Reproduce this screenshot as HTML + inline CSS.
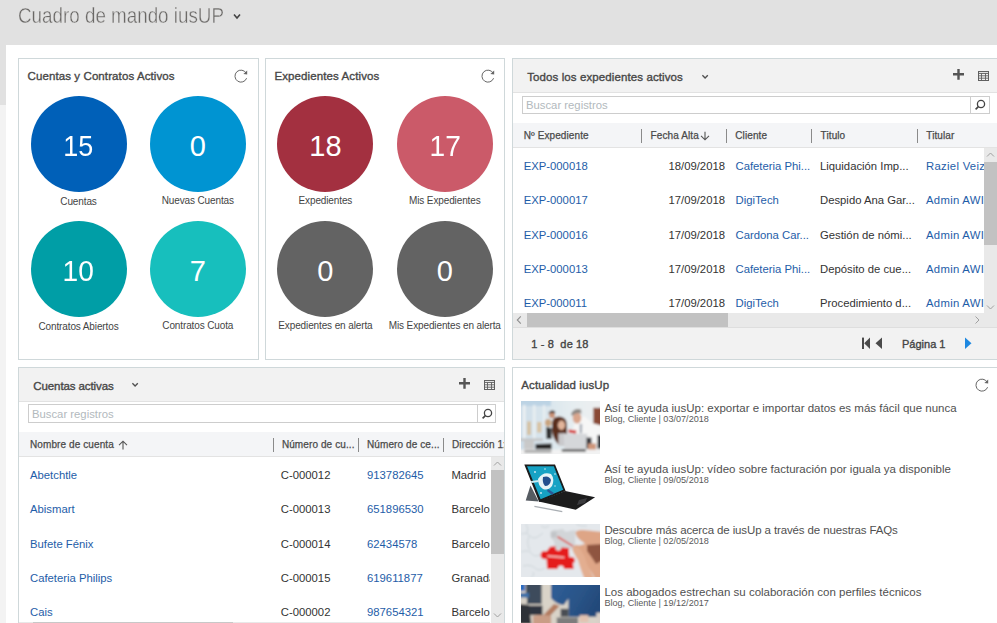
<!DOCTYPE html>
<html><head><meta charset="utf-8">
<style>
*{box-sizing:border-box;margin:0;padding:0}
html,body{width:997px;height:623px;overflow:hidden}
body{position:relative;background:#e1e1e1;font-family:"Liberation Sans",sans-serif;color:#333}
.a{position:absolute}
.t{position:absolute;white-space:nowrap;line-height:1;transform-origin:0 0}
.pnl{position:absolute;border:1px solid #cfd8da;background:#fff;overflow:hidden}
.hd{font-size:11.5px;color:#474747;-webkit-text-stroke:0.35px #474747;letter-spacing:0.1px}
.circ{position:absolute;width:96px;height:96px;border-radius:50%}
.num{position:absolute;width:96px;text-align:center;color:#fff;font-size:29px;line-height:1;top:0}
.lbl{position:absolute;width:160px;text-align:center;font-size:10px;letter-spacing:-0.12px;line-height:1;color:#444;white-space:nowrap}
.ch{font-size:10px;color:#4a4a4a;-webkit-text-stroke:0.25px #4a4a4a;letter-spacing:0.1px}
.lk{color:#1e5da8}
.tb{font-size:11.3px}
.sep{position:absolute;width:1.4px;height:14px;background:#8a8a8a;margin-top:-0.5px}
</style></head>
<body>
<!-- top title -->
<div class="t" style="left:17.6px;top:5.4px;font-size:22px;color:#6a6866;-webkit-text-stroke:0.4px #e1e1e1;transform:scaleX(0.855)">Cuadro de mando iusUP</div>
<svg class="a" style="left:232px;top:12px" width="10" height="9" viewBox="0 0 10 9"><polyline points="2,2.5 5,6 8,2.5" fill="none" stroke="#444" stroke-width="1.6"/></svg>

<div class="a" style="left:0;top:105px;width:6px;height:518px;background:#f3f3f3"></div>
<div class="a" style="left:6px;top:45px;width:991px;height:578px;background:#fff"></div>

<!-- Panel 1 -->
<div class="pnl" style="left:18px;top:58px;width:241px;height:302px"></div>
<div class="t hd" style="left:27.5px;top:71.27px">Cuentas y Contratos Activos</div>
<svg class="a" style="left:233px;top:68px" width="16" height="16" viewBox="0 0 16 16"><path d="M13.2 5.2 A6 6 0 1 0 13.6 10.2" fill="none" stroke="#666" stroke-width="1"/><path d="M14.2 2.6 L14.2 6.6 L10.4 6.0 Z" fill="#666"/></svg>

<div class="circ" style="left:30.5px;top:96px;background:#0060b8"></div>
<div class="circ" style="left:149.8px;top:96px;background:#0094d2"></div>
<div class="circ" style="left:30.5px;top:221.3px;background:#009ea6"></div>
<div class="circ" style="left:149.8px;top:221.3px;background:#17bfbd"></div>

<!-- Panel 2 -->
<div class="pnl" style="left:265px;top:58px;width:240px;height:302px"></div>
<div class="t hd" style="left:274.5px;top:71.27px">Expedientes Activos</div>
<svg class="a" style="left:480px;top:68px" width="16" height="16" viewBox="0 0 16 16"><path d="M13.2 5.2 A6 6 0 1 0 13.6 10.2" fill="none" stroke="#666" stroke-width="1"/><path d="M14.2 2.6 L14.2 6.6 L10.4 6.0 Z" fill="#666"/></svg>
<div class="circ" style="left:277.4px;top:96px;background:#a33040"></div>
<div class="circ" style="left:396.8px;top:96px;background:#cb5a69"></div>
<div class="circ" style="left:277.4px;top:221.3px;background:#636363"></div>
<div class="circ" style="left:396.8px;top:221.3px;background:#636363"></div>

<div class="num" style="left:30.5px;top:132.05px"><span style="display:inline-block;transform:scaleX(0.93)">15</span></div>
<div class="lbl" style="left:-1.5px;top:196.67px">Cuentas</div>
<div class="num" style="left:149.8px;top:132.05px"><span style="display:inline-block;transform:scaleX(1.0)">0</span></div>
<div class="lbl" style="left:117.8px;top:196.33px">Nuevas Cuentas</div>
<div class="num" style="left:277.4px;top:132.05px"><span style="display:inline-block;transform:scaleX(1.0)">18</span></div>
<div class="lbl" style="left:245.4px;top:196.33px">Expedientes</div>
<div class="num" style="left:396.8px;top:132.05px"><span style="display:inline-block;transform:scaleX(0.97)">17</span></div>
<div class="lbl" style="left:364.8px;top:196.33px">Mis Expedientes</div>
<div class="num" style="left:30.5px;top:256.85px"><span style="display:inline-block;transform:scaleX(0.97)">10</span></div>
<div class="lbl" style="left:-1.5px;top:321.67px">Contratos Abiertos</div>
<div class="num" style="left:149.8px;top:256.85px"><span style="display:inline-block;transform:scaleX(1.0)">7</span></div>
<div class="lbl" style="left:117.8px;top:321.33px">Contratos Cuota</div>
<div class="num" style="left:277.4px;top:256.85px"><span style="display:inline-block;transform:scaleX(1.0)">0</span></div>
<div class="lbl" style="left:245.4px;top:321.33px">Expedientes en alerta</div>
<div class="num" style="left:396.8px;top:256.85px"><span style="display:inline-block;transform:scaleX(1.0)">0</span></div>
<div class="lbl" style="left:364.8px;top:321.33px">Mis Expedientes en alerta</div>
<!-- P3, P4, P5 placeholders -->

<!-- Panel 3 -->
<div class="pnl" style="left:512px;top:58px;width:490px;height:302px;background:#fff"></div>
<div class="a" style="left:513px;top:59px;width:484px;height:34px;background:#f2f2f2;border-bottom:1px solid #e2e2e2"></div>
<div class="t hd" style="left:527.2px;top:72.27px">Todos los expedientes activos</div>
<svg class="a" style="left:700px;top:73px" width="10" height="8" viewBox="0 0 10 8"><polyline points="2.4,2.3 5.1,5 7.8,2.3" fill="none" stroke="#505050" stroke-width="1.35"/></svg>
<svg class="a" style="left:952px;top:68px" width="13" height="13" viewBox="0 0 13 13"><path d="M1 6.3H12M6.5 1V11.7" stroke="#555" stroke-width="2.4"/></svg>
<svg class="a" style="left:977px;top:70px" width="13" height="12" viewBox="0 0 13 12"><rect x="1.5" y="1.5" width="10" height="9" fill="none" stroke="#606060" stroke-width="1"/><path d="M1.5 3.4H11.5" stroke="#606060" stroke-width="1"/><path d="M1.5 5.8H11.5M1.5 8.2H11.5M4.5 3.4V10.5M8.5 3.4V10.5" stroke="#606060" stroke-width="0.9"/></svg>
<div class="a" style="left:522px;top:96px;width:468px;height:18px;border:1px solid #cdcdcd;background:#fff"></div>
<div class="a" style="left:970px;top:96px;width:20px;height:18px;border:1px solid #cdcdcd;background:#fff"></div>
<svg class="a" style="left:972px;top:97px" width="16" height="16" viewBox="0 0 16 16"><circle cx="9" cy="7" r="3.6" fill="none" stroke="#444" stroke-width="1.3"/><path d="M6.4 9.6L3.6 12.4" stroke="#444" stroke-width="1.6"/></svg>
<div class="t" style="left:526px;top:100.3px;font-size:11.3px;color:#b2b9bd">Buscar registros</div>

<div class="a" style="left:513px;top:123px;width:484px;height:25px;background:#f4f5f7;border-bottom:1px solid #e3e3e3"></div>
<div class="sep" style="left:641px;top:129px"></div>
<div class="sep" style="left:726px;top:129px"></div>
<div class="sep" style="left:811px;top:129px"></div>
<div class="sep" style="left:917px;top:129px"></div>
<div class="t ch" style="left:523.7px;top:131px">Nº Expediente</div>
<div class="t ch" style="left:650.6px;top:131px">Fecha Alta</div>
<svg class="a" style="left:700px;top:131px" width="10" height="10" viewBox="0 0 10 10"><path d="M5 0.8V8.8M1 4.8L5 8.8L9 4.8" fill="none" stroke="#555" stroke-width="1.1"/></svg>
<div class="t ch" style="left:735.3px;top:131px">Cliente</div>
<div class="t ch" style="left:820.6px;top:131px">Titulo</div>
<div class="t ch" style="left:926.3px;top:131px">Titular</div>
<div class="a" style="left:513px;top:148px;width:471px;height:165px;overflow:hidden">
<div class="t tb lk" style="left:10.7px;top:13.13px">EXP-000018</div>
<div class="t tb" style="left:113px;width:99px;text-align:right;top:13.13px">18/09/2018</div>
<div class="t tb lk" style="left:222.5px;top:13.13px">Cafeteria Phi...</div>
<div class="t tb" style="left:307px;top:13.13px">Liquidación Imp...</div>
<div class="t tb lk" style="left:413px;letter-spacing:0.3px;top:13.13px">Raziel Veiza</div>
<div class="t tb lk" style="left:10.7px;top:47.43px">EXP-000017</div>
<div class="t tb" style="left:113px;width:99px;text-align:right;top:47.43px">17/09/2018</div>
<div class="t tb lk" style="left:222.5px;top:47.43px">DigiTech</div>
<div class="t tb" style="left:307px;top:47.43px">Despido Ana Gar...</div>
<div class="t tb lk" style="left:413px;letter-spacing:0.3px;top:47.43px">Admin AWI</div>
<div class="t tb lk" style="left:10.7px;top:81.73px">EXP-000016</div>
<div class="t tb" style="left:113px;width:99px;text-align:right;top:81.73px">17/09/2018</div>
<div class="t tb lk" style="left:222.5px;top:81.73px">Cardona Car...</div>
<div class="t tb" style="left:307px;top:81.73px">Gestión de nómi...</div>
<div class="t tb lk" style="left:413px;letter-spacing:0.3px;top:81.73px">Admin AWI</div>
<div class="t tb lk" style="left:10.7px;top:116.03px">EXP-000013</div>
<div class="t tb" style="left:113px;width:99px;text-align:right;top:116.03px">17/09/2018</div>
<div class="t tb lk" style="left:222.5px;top:116.03px">Cafeteria Phi...</div>
<div class="t tb" style="left:307px;top:116.03px">Depósito de cue...</div>
<div class="t tb lk" style="left:413px;letter-spacing:0.3px;top:116.03px">Admin AWI</div>
<div class="t tb lk" style="left:10.7px;top:150.33px">EXP-000011</div>
<div class="t tb" style="left:113px;width:99px;text-align:right;top:150.33px">17/09/2018</div>
<div class="t tb lk" style="left:222.5px;top:150.33px">DigiTech</div>
<div class="t tb" style="left:307px;top:150.33px">Procedimiento d...</div>
<div class="t tb lk" style="left:413px;letter-spacing:0.3px;top:150.33px">Admin AWI</div>
</div>
<!-- v scrollbar -->
<div class="a" style="left:984px;top:148px;width:13px;height:165px;background:#e9e9e9"></div>
<div class="a" style="left:984px;top:162px;width:13px;height:83px;background:#c2c2c2"></div>
<svg class="a" style="left:984px;top:150px" width="13" height="10" viewBox="0 0 13 10"><polyline points="3,6.5 6.5,3 10,6.5" fill="none" stroke="#a0a0a0" stroke-width="1"/></svg>
<svg class="a" style="left:984px;top:301.5px" width="13" height="10" viewBox="0 0 13 10"><polyline points="3,3.5 6.5,7 10,3.5" fill="none" stroke="#a0a0a0" stroke-width="1"/></svg>
<!-- h scrollbar -->
<div class="a" style="left:513px;top:313px;width:484px;height:14px;background:#e9e9e9"></div>
<div class="a" style="left:527px;top:313px;width:201px;height:14px;background:#c2c2c2"></div>
<svg class="a" style="left:513px;top:313px" width="12" height="14" viewBox="0 0 12 14"><polyline points="7.8,3.3 4.3,7 7.8,10.7" fill="none" stroke="#8f8f8f" stroke-width="1.1"/></svg>
<svg class="a" style="left:971px;top:313px" width="12" height="14" viewBox="0 0 12 14"><polyline points="4.5,3.5 8,7 4.5,10.5" fill="none" stroke="#a0a0a0" stroke-width="1"/></svg>
<!-- footer -->
<div class="a" style="left:513px;top:327px;width:484px;height:32px;background:#f2f2f2;border-top:1px solid #dedede"></div>
<div class="t" style="left:531.2px;top:339.3px;font-size:11px;color:#444;-webkit-text-stroke:0.35px #444;letter-spacing:0.15px">1 - 8&nbsp; de 18</div>
<svg class="a" style="left:860px;top:336px" width="26" height="15" viewBox="0 0 26 15"><rect x="2" y="1.6" width="2" height="11.4" fill="#4a4a4a"/><path d="M10 1.6V13L4.2 7.3Z" fill="#4a4a4a"/><path d="M22 1.6V13L15.5 7.3Z" fill="#4a4a4a"/></svg>
<div class="t" style="left:902px;top:339.4px;font-size:11px;color:#444;-webkit-text-stroke:0.35px #444">Página 1</div>
<svg class="a" style="left:963px;top:336px" width="10" height="15" viewBox="0 0 10 15"><path d="M2 1.6V13L8.5 7.3Z" fill="#1e88e0"/></svg>


<!-- Panel 4 -->
<div class="pnl" style="left:18px;top:367px;width:487px;height:270px"></div>
<div class="a" style="left:19px;top:368px;width:485px;height:34px;background:#f2f2f2;border-bottom:1px solid #e2e2e2"></div>
<div class="t hd" style="left:33.3px;top:380.57px;letter-spacing:-0.1px">Cuentas activas</div>
<svg class="a" style="left:130px;top:381px" width="10" height="8" viewBox="0 0 10 8"><polyline points="2.4,2.3 5.1,5 7.8,2.3" fill="none" stroke="#505050" stroke-width="1.35"/></svg>
<svg class="a" style="left:458px;top:377px" width="13" height="13" viewBox="0 0 13 13"><path d="M1 6.3H12M6.5 1V11.7" stroke="#555" stroke-width="2.4"/></svg>
<svg class="a" style="left:483px;top:379px" width="13" height="12" viewBox="0 0 13 12"><rect x="1.5" y="1.5" width="10" height="9" fill="none" stroke="#606060" stroke-width="1"/><path d="M1.5 3.4H11.5" stroke="#606060" stroke-width="1"/><path d="M1.5 5.8H11.5M1.5 8.2H11.5M4.5 3.4V10.5M8.5 3.4V10.5" stroke="#606060" stroke-width="0.9"/></svg>
<div class="a" style="left:28px;top:404px;width:468px;height:19px;border:1px solid #cdcdcd;background:#fff"></div>
<div class="a" style="left:477px;top:404px;width:19px;height:19px;border:1px solid #cdcdcd;background:#fff"></div>
<svg class="a" style="left:479px;top:405.5px" width="16" height="16" viewBox="0 0 16 16"><circle cx="9" cy="7" r="3.6" fill="none" stroke="#444" stroke-width="1.3"/><path d="M6.4 9.6L3.6 12.4" stroke="#444" stroke-width="1.6"/></svg>
<div class="t" style="left:32px;top:408.8px;font-size:11.3px;color:#b2b9bd">Buscar registros</div>

<div class="a" style="left:19px;top:432px;width:485px;height:25px;background:#f4f5f7;border-bottom:1px solid #e3e3e3"></div>
<div class="sep" style="left:272.5px;top:438px"></div>
<div class="sep" style="left:358px;top:438px"></div>
<div class="sep" style="left:442.5px;top:438px"></div>
<div class="t ch" style="left:30px;top:440.2px">Nombre de cuenta</div>
<svg class="a" style="left:118px;top:439.5px" width="10" height="10" viewBox="0 0 10 10"><path d="M5 9.5V1.2M1 5.2L5 1.2L9 5.2" fill="none" stroke="#555" stroke-width="1.1"/></svg>
<div class="t ch" style="left:281.9px;top:440.2px">Número de cu...</div>
<div class="t ch" style="left:367px;top:440.2px">Número de ce...</div>
<div class="a" style="left:452px;top:436px;width:52px;height:18px;overflow:hidden"><div class="t ch" style="left:0;top:4px">Dirección 1:</div></div>
<div class="a" style="left:19px;top:457px;width:471px;height:166px;overflow:hidden">
<div class="t tb lk" style="left:11px;top:13.13px">Abetchtle</div>
<div class="t tb" style="left:261.8px;top:13.13px">C-000012</div>
<div class="t tb lk" style="left:348px;top:13.13px">913782645</div>
<div class="t tb" style="left:432.4px;top:13.13px">Madrid</div>
<div class="t tb lk" style="left:11px;top:47.33px">Abismart</div>
<div class="t tb" style="left:261.8px;top:47.33px">C-000013</div>
<div class="t tb lk" style="left:348px;top:47.33px">651896530</div>
<div class="t tb" style="left:432.4px;top:47.33px">Barcelona</div>
<div class="t tb lk" style="left:11px;top:81.53px">Bufete Fénix</div>
<div class="t tb" style="left:261.8px;top:81.53px">C-000014</div>
<div class="t tb lk" style="left:348px;top:81.53px">62434578</div>
<div class="t tb" style="left:432.4px;top:81.53px">Barcelona</div>
<div class="t tb lk" style="left:11px;top:115.73px">Cafeteria Philips</div>
<div class="t tb" style="left:261.8px;top:115.73px">C-000015</div>
<div class="t tb lk" style="left:348px;top:115.73px">619611877</div>
<div class="t tb" style="left:432.4px;top:115.73px">Granada</div>
<div class="t tb lk" style="left:11px;top:149.93px">Cais</div>
<div class="t tb" style="left:261.8px;top:149.93px">C-000002</div>
<div class="t tb lk" style="left:348px;top:149.93px">987654321</div>
<div class="t tb" style="left:432.4px;top:149.93px">Barcelona</div>
</div>
<div class="a" style="left:490.5px;top:457px;width:13px;height:166px;background:#e9e9e9"></div>
<div class="a" style="left:490.5px;top:470px;width:13px;height:84px;background:#c2c2c2"></div>
<svg class="a" style="left:490.5px;top:459px" width="13" height="10" viewBox="0 0 13 10"><polyline points="3,6.5 6.5,3 10,6.5" fill="none" stroke="#a0a0a0" stroke-width="1"/></svg>
<svg class="a" style="left:490.5px;top:610px" width="13" height="10" viewBox="0 0 13 10"><polyline points="3,3.5 6.5,7 10,3.5" fill="none" stroke="#a0a0a0" stroke-width="1"/></svg>
<div class="a" style="left:19px;top:622px;width:471px;height:1px;background:#e8e8e8"></div>
<div class="a" style="left:33px;top:622px;width:200px;height:1px;background:#c8c8c8"></div>


<!-- Panel 5 -->
<div class="pnl" style="left:512px;top:367px;width:490px;height:270px"></div>
<div class="t hd" style="left:521.3px;top:380.27px">Actualidad iusUp</div>
<svg class="a" style="left:974px;top:377px" width="16" height="16" viewBox="0 0 16 16"><path d="M13.2 5.2 A6 6 0 1 0 13.6 10.2" fill="none" stroke="#666" stroke-width="1"/><path d="M14.2 2.6 L14.2 6.6 L10.4 6.0 Z" fill="#666"/></svg>
<div class="a" style="left:521px;top:401.0px;width:79px;height:53px;overflow:hidden"><svg width="79" height="53" viewBox="0 0 79 53"><defs><filter id="bl0" x="-5%" y="-5%" width="110%" height="110%"><feGaussianBlur stdDeviation="0.9"/></filter><linearGradient id="g0" x1="0" y1="0" x2="1" y2="0"><stop offset="0" stop-color="#cddde8"/><stop offset="0.6" stop-color="#e4ecf0"/><stop offset="1" stop-color="#eef0f1"/></linearGradient></defs>
<rect width="79" height="53" fill="#e6ecef"/>
<g filter="url(#bl0)">
<rect x="-2" y="-2" width="83" height="57" fill="url(#g0)"/>
<rect x="-3" y="-3" width="33" height="8" fill="#bcd3e4"/>
<rect x="2" y="4" width="2.5" height="34" fill="#eef2f4"/><rect x="12" y="4" width="2.5" height="34" fill="#e9eff2"/><rect x="22" y="4" width="2" height="20" fill="#e9eff2"/>
<rect x="72.3" y="6.8" width="10" height="18" fill="#8a4a35"/>
<rect x="6" y="20.4" width="4" height="13.6" fill="#d6c2a2"/><rect x="16" y="21" width="4.4" height="10.5" fill="#d8c3a3"/>
<rect x="-3" y="37.4" width="25" height="2.6" fill="#c4c6c7"/>
<rect x="3" y="40" width="10" height="9" fill="#c9c9c9"/>
<path d="M14.5 43 L30.6 42.5 L30.6 48.5 L14.5 48.5Z" fill="#262626"/>
<ellipse cx="27.2" cy="21.7" rx="3.4" ry="3.8" fill="#c9a57f"/>
<path d="M25 26 L30.6 27 L30.6 38 L25.5 38Z" fill="#2e2e2e"/>
<path d="M30.6 14.5 L39 14.5 L39 28 L31 28Z" fill="#eef0f1"/>
<ellipse cx="31" cy="14" rx="3" ry="3.2" fill="#c99277"/>
<path d="M27.5 12 Q30.5 7.6 34.5 11 L33.5 12.5 Q30.5 10.8 28 13Z" fill="#3a2a22"/>
<path d="M31 22 Q31.5 15 38.5 15.5 Q46 16 46 24 L46 43 L37 43 Q32 38 31 30Z" fill="#5a2e1e"/>
<ellipse cx="40.5" cy="24.3" rx="3.6" ry="4.7" fill="#e2b59b"/>
<path d="M37.4 32.3 L44.2 32.3 L44.2 45 L37.4 45Z" fill="#c9c9cc"/>
<path d="M54 17 L64 15.5 L71 22 L82 25 L82 42.5 L68 42.5 L60 36 L52 30Z" fill="#f6f6f6"/>
<ellipse cx="56" cy="17" rx="4.3" ry="5.6" fill="#d9a58c"/>
<path d="M50 13 Q53 6.5 60 8.5 L60.5 12.5 Q55 10.5 51 15Z" fill="#8e8884"/>
<path d="M58.7 23 L61.2 23 L61 32.3 L58.7 32.3Z" fill="#a5acb6"/>
<path d="M47.6 28.5 L55.3 29.5 L55 32.7 L47.6 31.5Z" fill="#d62b27"/>
<path d="M42.5 32.7 L66.3 32.7 L66.3 48.5 L43.5 48.5Z" fill="#d5d7da"/>
<path d="M40.8 48.5 L64.6 48.5 L64.6 51 L40.8 51Z" fill="#3a3a3a"/>
<path d="M65.5 36.6 L70.5 36.6 L70.5 47.6 L65.5 47.6Z" fill="#34363b"/>
<path d="M76.5 34 L82 34 L82 47.6 L76.5 47.6Z" fill="#2d3036"/>
<path d="M67 42.5 L75 42.5 L75 49.3 L67 49.3Z" fill="#cf967a"/>
<rect x="-2" y="48.5" width="83" height="6" fill="#f2f2f2"/>
<rect x="3.4" y="49.3" width="27" height="2.3" fill="#9e9e9e"/>
<rect x="40.8" y="48.5" width="24" height="2" fill="#3a3a3a"/>
</g></svg></div>
<div class="t" style="left:604.4px;top:402.67px;font-size:11.5px;color:#505050">Así te ayuda iusUp: exportar e importar datos es más fácil que nunca</div>
<div class="t" style="left:604.4px;top:414.80px;font-size:9.1px;color:#5a5a5a">Blog, Cliente | 03/07/2018</div>
<div class="a" style="left:521px;top:462.3px;width:79px;height:53px;overflow:hidden"><svg width="79" height="53" viewBox="0 0 79 53"><defs><filter id="bl1" x="-10%" y="-10%" width="120%" height="120%"><feGaussianBlur stdDeviation="0.45"/></filter></defs>
<rect width="79" height="53" fill="#fff"/>
<g filter="url(#bl1)">
<path d="M4.7 38.5 L9.5 23.6 L17.7 39.5Z" fill="#565b62"/>
<path d="M17.7 39.5 L44.2 29 L74.1 35.2 L54.8 47.7Z" fill="#1c1c1e"/>
<path d="M58 38 L66 36 L64 41 L56 43Z" fill="#3a3a3e"/>
<path d="M3.3 2.6 L34 2.6 L44.6 29 L18.2 40Z" fill="#1a1a1a"/>
<path d="M6 4.3 L32.8 4.3 L42.2 27.8 L19.6 37.2Z" fill="#17a2c4"/>
<path d="M17 17 Q22 9 30 12 Q34 17 31 24 Q27 29 22 27 Q17 24 17 17Z" fill="#e6f3f7"/>
<path d="M22 15 Q28 13 30 18 Q29 24 24 24 Q21 21 22 15Z" fill="#23508e"/>
<path d="M10 19 L18 18 L17.5 20 L10.5 21Z" fill="#cdebf2"/>
<path d="M27 27 L33 31 L31 33 L26 29Z" fill="#2a5a98"/>
<circle cx="14" cy="10" r="0.9" fill="#d5eef5"/><circle cx="24" cy="7" r="0.8" fill="#d5eef5"/><circle cx="34" cy="12" r="0.8" fill="#d5eef5"/><circle cx="20" cy="31" r="0.9" fill="#d5eef5"/><circle cx="34" cy="24" r="0.7" fill="#d5eef5"/>
<path d="M13.4 44.3 L41.3 49.6" stroke="#a9aeb3" stroke-width="1.3"/>
</g></svg></div>
<div class="t" style="left:604.4px;top:463.97px;font-size:11.5px;color:#505050">Así te ayuda iusUp: vídeo sobre facturación por iguala ya disponible</div>
<div class="t" style="left:604.4px;top:476.10px;font-size:9.1px;color:#5a5a5a">Blog, Cliente | 09/05/2018</div>
<div class="a" style="left:521px;top:523.6px;width:79px;height:53px;overflow:hidden"><svg width="79" height="53" viewBox="0 0 79 53"><defs><filter id="bl2" x="-5%" y="-5%" width="110%" height="110%"><feGaussianBlur stdDeviation="0.95"/></filter></defs>
<rect width="79" height="53" fill="#e4e8ec"/>
<g filter="url(#bl2)">
<rect x="-2" y="-2" width="83" height="57" fill="#e4e8ec"/>
<path d="M0 10 Q6 8 9 12 Q12 16 18 12 L22 9 M5 0 Q8 5 6 9 M0 28 Q8 25 11 30 Q14 34 20 30 M8 12 Q5 20 9 26 M2 42 Q10 40 14 44 Q18 48 24 44 M20 2 Q24 5 28 2 M12 48 Q14 52 10 53 M60 44 Q66 40 70 44 M55 0 Q60 3 66 2" fill="none" stroke="#cbd1d6" stroke-width="0.9"/>
<path d="M29.8 8 Q32 5 36 6 L42 5.1 Q44 9 48 7 L54.4 6 L54 25.5 L46 25 Q43 22 40 25 L34 25.5 L33 17 Q29 15 29.8 8Z" fill="#d2d5d8"/>
<path d="M29.8 7.7 L35.7 7.7 L35.7 13.6 L29.8 13.6Z" fill="#c2c5c8"/>
<path d="M36.6 12.8 L51.9 22.1" stroke="#de4a44" stroke-width="1.6"/>
<path transform="translate(-1.5 -1) scale(1.06)" d="M25.5 27 Q22 25.5 20.5 28 Q19 32 21.5 33.5 Q24 35 25.5 33.5 L26 43.4 L36 43.4 Q36 40 39 40 Q42 40 42 43.4 L51 43.4 L50.5 37.4 Q53 37.5 52 34 Q51 31.5 47 32.3 L46.5 23.5 L40 23 Q38.5 26.5 36 26 Q33 25 34 22 L28.9 22.5Z" fill="#e51e1b"/>
<path d="M26.4 32 L43.4 33.5" stroke="#f6c9c6" stroke-width="1.3"/>
<path d="M54.4 8.5 Q56 5.5 62 6 L82 8 L82 56 L74.8 56 Q70 46 64 40 Q60 35 57 32 Q51 29 51.5 24 Q53 20 58 21.5 L64 20 L62 17.9 Q56 15 54.4 8.5Z" fill="#dea586"/>
<path d="M66 21 L82 20 L82 36 L75 40 Q70 32 66 27Z" fill="#8f5540"/>
<path d="M52 24 Q56 22 60 26 Q64 32 66 40 L74 56 L64 56 Q59 44 57 36 Q53 31 52 24Z" fill="#e3ae90"/>
</g></svg></div>
<div class="t" style="left:604.4px;top:525.27px;font-size:11.5px;color:#505050;letter-spacing:-0.12px">Descubre más acerca de iusUp a través de nuestras FAQs</div>
<div class="t" style="left:604.4px;top:537.40px;font-size:9.1px;color:#5a5a5a">Blog, Cliente | 02/05/2018</div>
<div class="a" style="left:521px;top:584.9px;width:79px;height:53px;overflow:hidden"><svg width="79" height="53" viewBox="0 0 79 53"><defs><filter id="bl3" x="-5%" y="-5%" width="110%" height="110%"><feGaussianBlur stdDeviation="1"/></filter><linearGradient id="g3" x1="0" y1="0" x2="1" y2="0.4"><stop offset="0" stop-color="#2f5f98"/><stop offset="0.6" stop-color="#2a5488"/><stop offset="1" stop-color="#234a7a"/></linearGradient></defs>
<rect width="79" height="53" fill="#2a5488"/>
<g filter="url(#bl3)">
<rect x="-2" y="-2" width="83" height="57" fill="#d9d3c8"/>
<rect x="-2" y="-2" width="6" height="8" fill="#2a6cc0"/>
<path d="M4.8 -2 L20.6 -2 L20.6 19 L4.8 19Z" fill="#3d4b5b"/>
<rect x="-2" y="8" width="10" height="4.7" fill="#3e6fa8"/>
<rect x="-2" y="12.7" width="8" height="6" fill="#d5cfc5"/>
<rect x="8" y="20.6" width="13.4" height="9.5" fill="#2f3540"/>
<path d="M-2 19 L8 20 L10.3 39 L-2 39Z" fill="#2e3238"/>
<path d="M30 -2 L81 -2 L81 28 L76 31.7 L47.5 31.7 L47.5 13.5 L42.8 20 Q36 20 30 13Z" fill="url(#g3)"/>
<path d="M39.6 23.8 L47.5 23.8 L47.5 31.7 L39.6 31.7Z" fill="#4a4d52"/>
<path d="M33 19 L38.5 21 L27 33 L21.5 31Z" fill="#b27c61"/>
<path d="M11.9 31 Q20 29 30.1 31 L30.1 40 L11.9 40Z" fill="#c99d86"/>
<path d="M35.7 32.5 L57 32.5 L57 40 L35.7 40Z" fill="#7c7c7c"/>
<path d="M58.6 30.1 L67.4 30.1 L67.4 37.2 L58.6 37.2Z" fill="#e2c2b0"/>
<path d="M75.3 27.7 L81 27.7 L81 40 L75.3 40Z" fill="#d8d0c8"/>
</g></svg></div>
<div class="t" style="left:604.4px;top:586.57px;font-size:11.5px;color:#505050">Los abogados estrechan su colaboración con perfiles técnicos</div>
<div class="t" style="left:604.4px;top:598.70px;font-size:9.1px;color:#5a5a5a">Blog, Cliente | 19/12/2017</div>

</body></html>
